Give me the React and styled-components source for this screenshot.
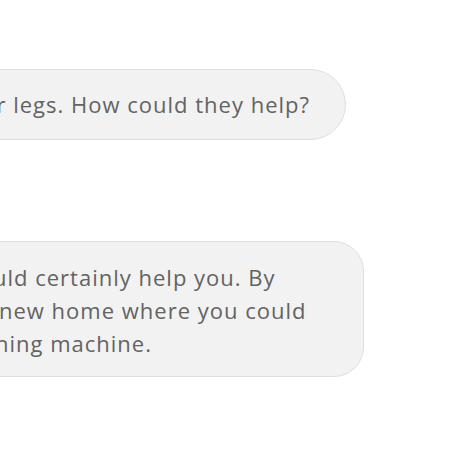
import React from "react";
import styled, { createGlobalStyle } from "styled-components";

const GlobalStyle = createGlobalStyle`
  html, body {
    margin: 0;
    padding: 0;
    background: #ffffff;
    overflow: hidden;
  }
  body {
    font-family: "Open Sans", Roboto, "Liberation Sans", sans-serif;
  }
`;

const Thread = styled.div`
  width: 454px;
  height: 454px;
  display: flex;
  flex-direction: column;
  padding-top: 69px;
  gap: 101px;
  box-sizing: border-box;
`;

const Row = styled.div`
  display: flex;
  justify-content: flex-end;
  padding-right: ${(p) => p.$right}px;
`;

const Bubble = styled.div`
  flex-shrink: 0;
  box-sizing: border-box;
  background: #f2f2f2;
  border: 1px solid #dedede;
  color: #636363;
  font-size: 22px;
  line-height: 33px;
  letter-spacing: 1px;
  white-space: nowrap;
`;

const Pill = styled(Bubble)`
  height: 71px;
  border-radius: 36px;
  padding: 0 35px 0 24px;
  display: flex;
  align-items: center;
`;

const Card = styled(Bubble)`
  width: 560px;
  border-radius: 30px;
  padding: 19px 24px 16px 24px;
`;

const Line = styled.div`
  display: flex;
  padding-left: ${(p) => p.$shift || 0}px;
`;

// hidden start of each wrapped line, right-aligned so it ends at the window edge
const Lead = styled.span`
  flex: 0 0 164px;
  min-width: 0;
  display: flex;
  justify-content: flex-end;
  white-space: pre;
`;

const answer = [
  { lead: "A dog trainer co", rest: "uld certainly help you. By" },
  { lead: "finding him a ", rest: "new home where you could", shift: 6 },
  { lead: "buy a was", rest: "hing machine.", shift: 2 },
];

const App = () => {
  return (
    <>
      <GlobalStyle />
      <Thread>
        <Row $right={108}>
          <Pill>My dog keeps chewing on our legs. How could they help?</Pill>
        </Row>
        <Row $right={90}>
          <Card>
            {answer.map(({ lead, rest, shift }, index) => (
              <Line key={index} $shift={shift}>
                <Lead>
                  <span>{lead}</span>
                </Lead>
                <span>{rest}</span>
              </Line>
            ))}
          </Card>
        </Row>
      </Thread>
    </>
  );
};

export default App;
